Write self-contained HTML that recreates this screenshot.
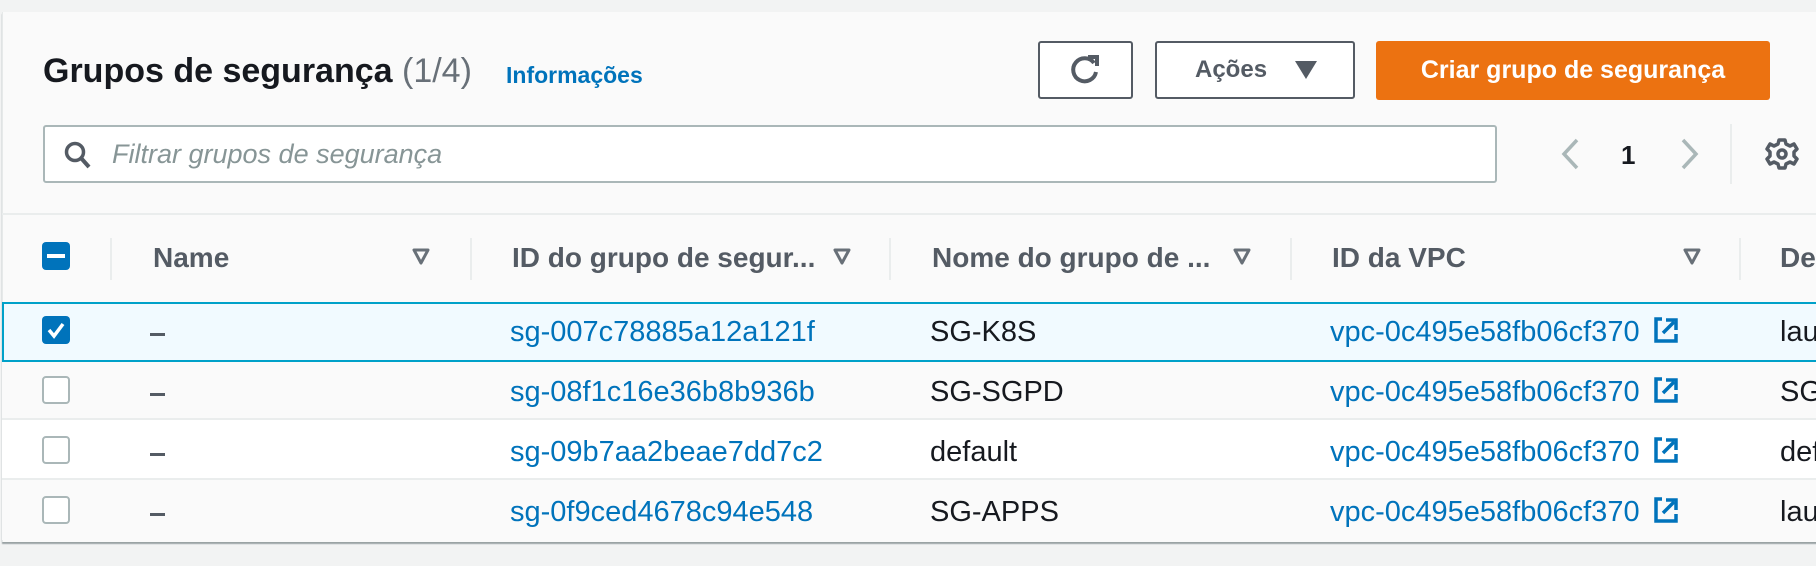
<!DOCTYPE html>
<html><head><meta charset="utf-8"><style>
*{box-sizing:border-box;margin:0;padding:0}
body{width:1816px;height:566px;background:#f2f3f3;font-family:"Liberation Sans",sans-serif;position:relative;overflow:hidden}
.a{position:absolute}
.panel{left:2px;top:12px;width:1830px;height:530px;background:#fafafa;border-left:1px solid #e6e9e9;box-shadow:0 2px 1px #9aa3a4}
.t{white-space:nowrap;line-height:1}
.btn{border:2px solid #545b64;border-radius:3px;background:#fff}
.hd{color:#545b64;font-weight:bold;font-size:28px}
.div{width:2px;background:#eaeded}
.cb{width:28px;height:28px;border-radius:4px}
.cbe{border:2px solid #aab7b8;background:#fff}
.link{color:#0073bb;font-size:29px}
.txt{color:#16191f;font-size:29px}
.dash{width:15px;height:3px;background:#545b64}
</style></head><body>
<div class="a panel"></div>
<div class="a t" style="left:43px;top:54px;font-size:34px;font-weight:bold;color:#16191f">Grupos de segurança <span style="font-weight:normal;color:#687078">(1/4)</span></div>
<div class="a t" style="left:506px;top:64px;font-size:23px;font-weight:bold;color:#0073bb">Informações</div>

<div class="a btn" style="left:1038px;top:41px;width:95px;height:58px"></div>
<svg class="a" style="left:1068px;top:53px" width="34" height="34" viewBox="0 0 34 34"><path d="M26 10 A11.5 11.5 0 1 0 28 19" fill="none" stroke="#545b64" stroke-width="4"/><path d="M20 4 L29 4 L29 13" fill="none" stroke="#545b64" stroke-width="4"/></svg>
<div class="a btn" style="left:1155px;top:41px;width:200px;height:58px"></div>
<div class="a t" style="left:1195px;top:58px;font-size:24px;font-weight:bold;color:#545b64">Ações</div>
<svg class="a" style="left:1295px;top:61px" width="22" height="18"><path d="M0 0 H22 L11 18Z" fill="#545b64"/></svg>
<div class="a" style="left:1376px;top:41px;width:394px;height:59px;background:#ec7211;border-radius:3px"></div>
<div class="a t" style="left:1376px;top:58px;width:394px;text-align:center;font-size:25px;font-weight:bold;color:#fff">Criar grupo de segurança</div>

<div class="a" style="left:43px;top:125px;width:1454px;height:58px;background:#fff;border:2px solid #aab7b8;border-radius:3px"></div>
<svg class="a" style="left:64px;top:141px" width="28" height="30"><circle cx="11" cy="11" r="8.5" fill="none" stroke="#545b64" stroke-width="3.5"/><path d="M17 17 L25 26" stroke="#545b64" stroke-width="4"/></svg>
<div class="a t" style="left:112px;top:141px;font-size:27px;font-style:italic;color:#879596">Filtrar grupos de segurança</div>

<svg class="a" style="left:1560px;top:138px" width="20" height="32"><path d="M17 2 L4 16 L17 30" fill="none" stroke="#aab7b8" stroke-width="3.5"/></svg>
<div class="a t" style="left:1621px;top:142px;font-size:26px;font-weight:bold;color:#16191f">1</div>
<svg class="a" style="left:1680px;top:138px" width="20" height="32"><path d="M3 2 L16 16 L3 30" fill="none" stroke="#aab7b8" stroke-width="3.5"/></svg>
<div class="a div" style="left:1730px;top:124px;height:60px"></div>
<svg class="a" style="left:1765px;top:137px" width="34" height="34" viewBox="0 0 34 34"><g fill="none" stroke="#545b64" stroke-width="3.5"><circle cx="17" cy="17" r="4"/><path d="M14 3h6l1 4 4 2 4-2 3 5-3 3v4l3 3-3 5-4-2-4 2-1 4h-6l-1-4-4-2-4 2-3-5 3-3v-4l-3-3 3-5 4 2 4-2z" stroke-linejoin="round"/></g></svg>

<div class="a" style="left:2px;top:213px;width:1814px;height:2px;background:#eaeded"></div>

<div class="a cb" style="left:42px;top:242px;background:#0073bb"></div>
<div class="a" style="left:47px;top:254px;width:18px;height:4px;background:#fff"></div>
<div class="a div" style="left:110px;top:238px;height:42px"></div>
<div class="a t hd" style="left:153px;top:244px">Name</div>
<svg class="a" style="left:412px;top:248px" width="18" height="18"><path d="M2 2 H16 L9 15Z" fill="none" stroke="#687078" stroke-width="3" stroke-linejoin="round"/></svg>
<div class="a div" style="left:470px;top:238px;height:42px"></div>
<div class="a t hd" style="left:512px;top:244px">ID do grupo de segur...</div>
<svg class="a" style="left:833px;top:248px" width="18" height="18"><path d="M2 2 H16 L9 15Z" fill="none" stroke="#687078" stroke-width="3" stroke-linejoin="round"/></svg>
<div class="a div" style="left:889px;top:238px;height:42px"></div>
<div class="a t hd" style="left:932px;top:244px">Nome do grupo de ...</div>
<svg class="a" style="left:1233px;top:248px" width="18" height="18"><path d="M2 2 H16 L9 15Z" fill="none" stroke="#687078" stroke-width="3" stroke-linejoin="round"/></svg>
<div class="a div" style="left:1290px;top:238px;height:42px"></div>
<div class="a t hd" style="left:1332px;top:244px">ID da VPC</div>
<svg class="a" style="left:1683px;top:248px" width="18" height="18"><path d="M2 2 H16 L9 15Z" fill="none" stroke="#687078" stroke-width="3" stroke-linejoin="round"/></svg>
<div class="a div" style="left:1739px;top:238px;height:42px"></div>
<div class="a t hd" style="left:1780px;top:244px">De</div>

<div class="a" style="left:2px;top:302px;width:1814px;height:60px;background:#f1faff;border-top:2px solid #00a1c9;border-bottom:2px solid #00a1c9;border-left:2px solid #00a1c9"></div>
<div class="a" style="left:2px;top:362px;width:1814px;height:58px;background:#fafafa;border-bottom:2px solid #eaeded"></div>
<div class="a" style="left:2px;top:420px;width:1814px;height:60px;background:#fff;border-bottom:2px solid #eaeded"></div>
<div class="a" style="left:2px;top:480px;width:1814px;height:60px;background:#fafafa"></div>

<div class="a cb" style="left:42px;top:316px;background:#0073bb"></div>
<svg class="a" style="left:42px;top:316px" width="28" height="28"><path d="M7 14 L12 20 L21 8" fill="none" stroke="#fff" stroke-width="3.5"/></svg>
<div class="a cb cbe" style="left:42px;top:376px"></div>
<div class="a cb cbe" style="left:42px;top:436px"></div>
<div class="a cb cbe" style="left:42px;top:496px"></div>

<div class="a dash" style="left:150px;top:333px"></div>
<div class="a dash" style="left:150px;top:393px"></div>
<div class="a dash" style="left:150px;top:453px"></div>
<div class="a dash" style="left:150px;top:513px"></div>

<div class="a t link" style="left:510px;top:318px">sg-007c78885a12a121f</div>
<div class="a t link" style="left:510px;top:378px">sg-08f1c16e36b8b936b</div>
<div class="a t link" style="left:510px;top:438px">sg-09b7aa2beae7dd7c2</div>
<div class="a t link" style="left:510px;top:498px">sg-0f9ced4678c94e548</div>

<div class="a t txt" style="left:930px;top:318px">SG-K8S</div>
<div class="a t txt" style="left:930px;top:378px">SG-SGPD</div>
<div class="a t txt" style="left:930px;top:438px">default</div>
<div class="a t txt" style="left:930px;top:498px">SG-APPS</div>

<div class="a t link" style="left:1330px;top:318px">vpc-0c495e58fb06cf370</div>
<div class="a t link" style="left:1330px;top:378px">vpc-0c495e58fb06cf370</div>
<div class="a t link" style="left:1330px;top:438px">vpc-0c495e58fb06cf370</div>
<div class="a t link" style="left:1330px;top:498px">vpc-0c495e58fb06cf370</div>
<svg class="a" style="left:1653px;top:316px" width="26" height="28"><path d="M9 3 H3 V25 H23 V18" fill="none" stroke="#0073bb" stroke-width="3.5"/><path d="M10 17 L21 6 M13 4 H23 V14" fill="none" stroke="#0073bb" stroke-width="3.5"/></svg>
<svg class="a" style="left:1653px;top:376px" width="26" height="28"><path d="M9 3 H3 V25 H23 V18" fill="none" stroke="#0073bb" stroke-width="3.5"/><path d="M10 17 L21 6 M13 4 H23 V14" fill="none" stroke="#0073bb" stroke-width="3.5"/></svg>
<svg class="a" style="left:1653px;top:436px" width="26" height="28"><path d="M9 3 H3 V25 H23 V18" fill="none" stroke="#0073bb" stroke-width="3.5"/><path d="M10 17 L21 6 M13 4 H23 V14" fill="none" stroke="#0073bb" stroke-width="3.5"/></svg>
<svg class="a" style="left:1653px;top:496px" width="26" height="28"><path d="M9 3 H3 V25 H23 V18" fill="none" stroke="#0073bb" stroke-width="3.5"/><path d="M10 17 L21 6 M13 4 H23 V14" fill="none" stroke="#0073bb" stroke-width="3.5"/></svg>

<div class="a t txt" style="left:1780px;top:318px">lau</div>
<div class="a t txt" style="left:1780px;top:378px">SG</div>
<div class="a t txt" style="left:1780px;top:438px">def</div>
<div class="a t txt" style="left:1780px;top:498px">lau</div>
</body></html>
